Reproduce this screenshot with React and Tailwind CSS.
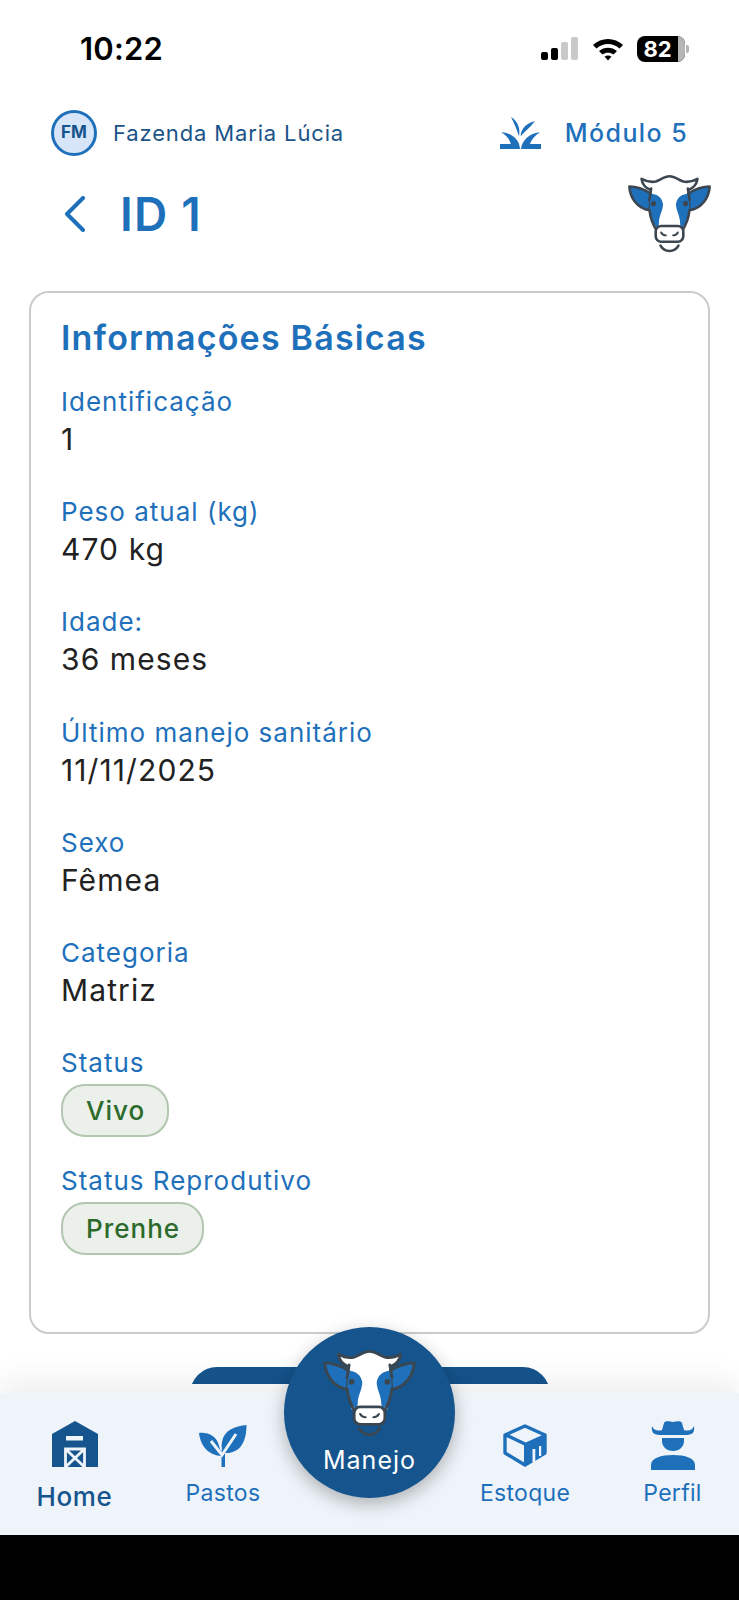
import React from "react";

const BLUE = "#1e70bb";
const NAVY = "#15548c";
const NAVBG = "#eff4fa";

function Cow({ className, stroke = "#3b4650", face = "#ffffff" }) {
  const half = (
    <>
      <path d="M107 82 C85 68 62 60 40 60 C42 92 62 128 103 134 Z" fill={BLUE} stroke={stroke} strokeWidth="8" strokeLinejoin="round" />
      <path d="M105 82 C126 82 143 94 145 116 C143 138 132 152 132 174 L130 194 L116 176 C108 156 104 144 103 134 Z" fill={BLUE} />
      <path d="M103 134 C105 158 114 180 127 200" fill="none" stroke={stroke} strokeWidth="8" strokeLinecap="round" />
      <path d="M108 66 L102 102" fill="none" stroke={stroke} strokeWidth="8" strokeLinecap="round" />
      <circle cx="115" cy="113" r="8" fill={stroke} />
    </>
  );
  return (
    <svg viewBox="36 24 258 246" className={className}>
      <path d="M78 36 C95 45 110 47 122 44 C135 40 150 28 165 28 C180 28 195 40 208 44 C220 47 235 45 252 36 C250 52 240 64 225 70 L215 190 H115 L105 70 C92 64 80 52 78 36 Z" fill={face} stroke="none" />
      <path d="M105 70 C90 64 80 52 78 36 C95 45 110 47 122 44 C135 40 150 28 165 28 C180 28 195 40 208 44 C220 47 235 45 252 36 C250 52 240 64 225 70" fill="none" stroke={stroke} strokeWidth="8" strokeLinejoin="round" strokeLinecap="round" />
      {half}
      <g transform="translate(330 0) scale(-1 1)">{half}</g>
      <rect x="122" y="183" width="86" height="49" rx="17" fill={face} stroke={stroke} strokeWidth="8" />
      <path d="M139 203 C142 209 147 212 154 212 M191 203 C188 209 183 212 176 212" fill="none" stroke={stroke} strokeWidth="6" strokeLinecap="round" />
      <path d="M137 244 C150 266 180 266 193 244" fill="none" stroke={stroke} strokeWidth="8" strokeLinecap="round" />
    </svg>
  );
}

function Barn() {
  return (
    <svg viewBox="0 0 46 46" className="w-[46px] h-[46px]">
      <path d="M0 13 L23 0 L46 13 V46 H0 Z" fill={NAVY} />
      <rect x="14" y="15" width="17" height="4.500" fill={NAVBG} />
      <path d="M13.500 46 V28 H32.500 V46 M13.500 28 L32.500 46 M32.500 28 L13.500 46" fill="none" stroke={NAVBG} strokeWidth="2.800" />
    </svg>
  );
}

function Leaf() {
  return (
    <svg viewBox="0 0 48 43" className="w-[48px] h-[43px]">
      <path d="M0 9 C9 8 18 12 20 22 L22 28 V32 C12 31 2 25 0 9 Z" fill={BLUE} />
      <path d="M47.500 1 C36 2 25 6 23 18 C22 22 23 26 24 29 L27 29 C38 29 47.500 22 47.500 1 Z" fill={BLUE} />
      <rect x="22.500" y="26" width="3.500" height="17" fill={BLUE} />
      <path d="M12 17 L23 31 L37 10" fill="none" stroke={NAVBG} strokeWidth="3" />
    </svg>
  );
}

function Box() {
  return (
    <svg viewBox="0 0 44 43" className="w-[44px] h-[43px]">
      <path d="M22 2 L42 11 V29 L22 41 L2 29 V11 Z" fill="none" stroke={BLUE} strokeWidth="3.400" strokeLinejoin="round" />
      <path d="M3 11 L22 20" fill="none" stroke={BLUE} strokeWidth="3.400" />
      <path d="M22 20 L42 11 V29 L22 41 Z" fill={BLUE} stroke={BLUE} strokeWidth="2" strokeLinejoin="round" />
      <rect x="29.500" y="25" width="2.800" height="13" fill={NAVBG} />
      <rect x="36" y="22" width="2.200" height="10" fill={NAVBG} />
    </svg>
  );
}

function Hat() {
  return (
    <svg viewBox="0 0 44 50" className="w-[44px] h-[50px] translate-y-[3px]">
      <path d="M1 6 C0 13 3 15 10 15 H34 C41 15 44 13 43 6 C41 11 37 11 33 10 L31 3 C29 0 25 2 22 2 C19 2 15 0 13 3 L11 10 C7 11 3 11 1 6 Z" fill={BLUE} />
      <path d="M11 18 H33 V21 C33 27 28 31 22 31 C16 31 11 27 11 21 Z" fill={BLUE} />
      <path d="M0 50 V45 C0 38 10 35 22 35 C34 35 44 38 44 45 V50 Z" fill={BLUE} />
    </svg>
  );
}

function Grass() {
  return (
    <svg viewBox="0 0 123 96" className="w-[41px] h-[32px]">
      <path d="M33 0 C52 12 62 32 57 58 C50 35 42 18 33 0 Z" fill={BLUE} />
      <path d="M105 12 C80 18 62 35 62 58 C75 42 92 30 105 12 Z" fill={BLUE} />
      <path d="M3 46 C28 46 58 62 60 96 H0 V81 H32 C30 68 20 56 3 46 Z" fill={BLUE} />
      <path d="M120 46 C92 48 66 68 63 96 H123 V81 H90 C94 68 105 56 120 46 Z" fill={BLUE} />
    </svg>
  );
}

function Field({ label, value }) {
  return (
    <div className="h-[110.2px] flex flex-col">
      <span className="text-[26px] leading-[37px] tracking-[1px] text-[#1e70bb]">{label}</span>
      <span className="text-[30px] leading-[37px] pt-px tracking-[1.1px] text-[#222222]">{value}</span>
    </div>
  );
}

function Pill({ children }) {
  return (
    <span className="self-start mt-[3px] h-[53px] pl-[23px] pr-[22px] flex items-center rounded-[24px] border-2 border-[#b2c6b0] bg-[#ebf0ea] text-[26px] font-medium tracking-[1px] text-[#2b6a2b]">
      {children}
    </span>
  );
}

function NavItem({ icon, label, className }) {
  return (
    <div className={"flex flex-col items-center " + className}>
      <div className="h-[50px] flex items-end justify-center">{icon}</div>
      <span className="text-[23px] leading-[28px] mt-[12px] tracking-[0.3px] text-[#1e70bb]">{label}</span>
    </div>
  );
}

export default function App() {
  return (
    <div className="relative w-[739px] h-[1600px] bg-white flex flex-col overflow-hidden font-['Inter',sans-serif]">
      {/* status bar */}
      <div className="h-[98px] flex items-center pb-[1px] pl-[80px] pr-[50px] shrink-0">
        <span className="text-[31px] font-semibold tracking-[0.2px] text-black leading-none">10:22</span>
        <div className="ml-auto flex items-center">
          <div className="flex items-end gap-[3px] h-[23px]">
            <span className="w-[7px] h-[8px] rounded-[2px] bg-black" />
            <span className="w-[7px] h-[12px] rounded-[2px] bg-black" />
            <span className="w-[7px] h-[18px] rounded-[2px] bg-[#c9c9c9]" />
            <span className="w-[7px] h-[23px] rounded-[2px] bg-[#c9c9c9]" />
          </div>
          <svg viewBox="0 0 32 24" className="w-[32px] h-[24px] ml-[14px]">
            <path d="M1 8 C9 0 23 0 31 8 L27.500 11.500 C21 5.500 11 5.500 4.500 11.500 Z" fill="#000" />
            <path d="M7 14 C12 9.500 20 9.500 25 14 L21.500 17.500 C18.500 15 13.500 15 10.500 17.500 Z" fill="#000" />
            <path d="M12.500 19.500 C15 18 17 18 19.500 19.500 L16 23.500 Z" fill="#000" />
          </svg>
          <div className="ml-[13px] flex items-center">
            <div className="w-[48px] h-[26px] rounded-[8px] bg-black overflow-hidden flex">
              <span className="w-[41px] text-center text-[22px] font-bold leading-[26px] text-white">82</span>
              <span className="flex-1 bg-[#b5b5b5]" />
            </div>
            <span className="w-[3px] h-[8px] ml-[1px] rounded-r-[2px] bg-[#b5b5b5]" />
          </div>
        </div>
      </div>

      {/* farm row */}
      <div className="h-[70px] flex items-center pl-[51px] pr-[51px] shrink-0">
        <div className="w-[46px] h-[46px] rounded-full border-[3px] border-[#1e70bb] bg-[#d6e5f8] flex items-center justify-center text-[17px] font-bold text-[#15548c]">
          FM
        </div>
        <span className="ml-[16px] text-[22px] tracking-[0.85px] text-[#1a5488]">Fazenda Maria Lúcia</span>
        <div className="ml-auto flex items-center">
          <Grass />
          <span className="ml-[24px] pt-px text-[25px] font-medium tracking-[1.4px] text-[#1e70bb]">Módulo 5</span>
        </div>
      </div>

      {/* title row */}
      <div className="h-[92px] flex items-center pl-[64px] pr-[28px] shrink-0">
        <svg viewBox="0 0 22 36" className="w-[22px] h-[36px]">
          <path d="M19 2 L3 18 L19 34" fill="none" stroke={BLUE} strokeWidth="4" strokeLinecap="round" strokeLinejoin="round" />
        </svg>
        <span className="ml-[34px] text-[46px] font-semibold tracking-[1.2px] text-[#1e70bb] leading-none">ID 1</span>
        <Cow className="ml-auto w-[83px] h-[79px]" />
      </div>

      {/* card */}
      <div className="mx-[29px] mt-[31px] h-[1043px] shrink-0 rounded-[20px] border-2 border-[#cbcbcb] bg-white pl-[30px] pt-[23px] flex flex-col">
        <h1 className="text-[34px] leading-[44px] font-semibold tracking-[1.2px] text-[#1e70bb] mb-[23px]">Informações Básicas</h1>
        <Field label="Identificação" value="1" />
        <Field label="Peso atual (kg)" value="470 kg" />
        <Field label="Idade:" value="36 meses" />
        <Field label="Último manejo sanitário" value="11/11/2025" />
        <Field label="Sexo" value="Fêmea" />
        <Field label="Categoria" value="Matriz" />
        <div className="flex flex-col h-[118px]">
          <span className="text-[26px] leading-[37px] tracking-[1px] text-[#1e70bb]">Status</span>
          <Pill>Vivo</Pill>
        </div>
        <div className="flex flex-col">
          <span className="text-[26px] leading-[37px] tracking-[1px] text-[#1e70bb]">Status Reprodutivo</span>
          <Pill>Prenhe</Pill>
        </div>
      </div>

      {/* button peeking */}
      <div className="ml-[190px] mt-[33px] h-[17px] w-[360px] shrink-0 overflow-hidden">
        <div className="h-[60px] rounded-t-[27px] bg-[#15548c]" />
      </div>

      {/* nav */}
      <div className="mt-[9px] h-[142px] shrink-0 bg-[#eff4fa] shadow-[0_-12px_30px_rgba(0,0,0,0.07)] relative">
        <div className="flex h-full">
          <div className="w-[149px] flex flex-col items-center pt-[28px]">
            <Barn />
            <span className="text-[26px] leading-[32px] mt-[14px] font-medium tracking-[0.6px] text-[#15548c]">Home</span>
          </div>
          <NavItem className="w-[148px] pt-[24px]" icon={<Leaf />} label="Pastos" />
          <div className="w-[156px]" />
          <NavItem className="w-[144px] pt-[24px]" icon={<Box />} label="Estoque" />
          <NavItem className="w-[142px] pl-[9px] pt-[24px]" icon={<Hat />} label="Perfil" />
        </div>
      </div>

      {/* black bar */}
      <div className="flex-1 bg-black" />

      {/* center button */}
      <div className="absolute left-[284px] top-[1327px] w-[171px] h-[171px] rounded-full bg-[#15548c] shadow-[0_6px_18px_rgba(0,0,0,0.28)] flex flex-col items-center pt-[23px]">
        <Cow className="w-[93px] h-[88px]" stroke="#3a4650" />
        <span className="mt-[7px] text-[25px] leading-[30px] tracking-[1px] text-white">Manejo</span>
      </div>
    </div>
  );
}
